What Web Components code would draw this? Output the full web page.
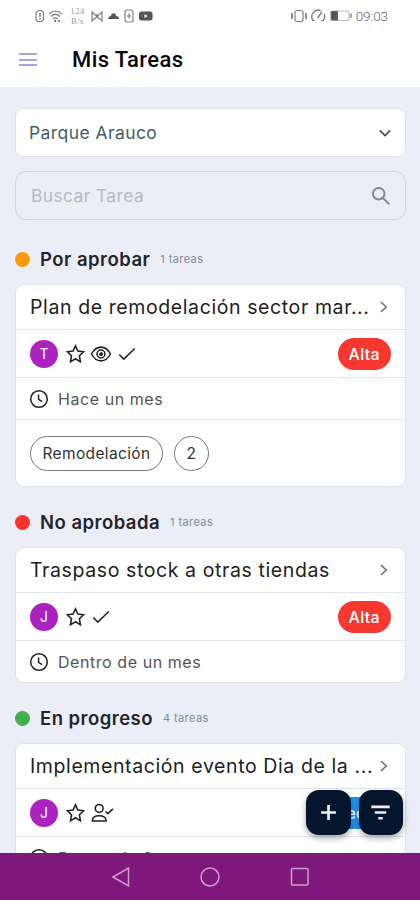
<!DOCTYPE html>
<html lang="es">
<head>
<meta charset="utf-8">
<title>Mis Tareas</title>
<style>
    body {
        margin: 0;
        width: 420px;
        height: 900px;
        overflow: hidden;
        font-family: Inter, "Noto Sans", sans-serif;
        background: #ebeef7;
        color: #1c1c1e;
    }
</style>
</head>
<body>
<task-app>
    <status-bar slot="top" time="09:03"></status-bar>
    <app-header slot="top">Mis Tareas</app-header>

    <select-field>Parque Arauco</select-field>
    <search-field>Buscar Tarea</search-field>

    <task-section color="#ff980a" count="1 tareas">
        <span slot="title">Por aprobar</span>
        <task-card initial="T" icons="star eye check" priority="Alta" due="Hace un mes">
            Plan de remodelación sector mar...
            <task-tag slot="tags">Remodelación</task-tag>
            <task-tag slot="tags">2</task-tag>
        </task-card>
    </task-section>

    <task-section color="#f8352d" count="1 tareas">
        <span slot="title">No aprobada</span>
        <task-card initial="J" icons="star check" priority="Alta" due="Dentro de un mes">
            Traspaso stock a otras tiendas
        </task-card>
    </task-section>

    <task-section color="#42ae4c" count="4 tareas">
        <span slot="title">En progreso</span>
        <task-card initial="J" icons="star user" priority="Media" tone="#2094f0" due="Dentro de 2 meses">
            Implementación evento Dia de la ...
        </task-card>
    </task-section>

    <fab-button slot="actions" icon="plus"></fab-button>
    <fab-button slot="actions" icon="filter"></fab-button>
    <nav-bar slot="bottom"></nav-bar>
</task-app>

<script>
const ICONS = {
    star: '<path d="M12.500 3.200l2.600 5.600 6.200.8-4.500 4.300 1.100 6.600-5.400-3.300-5.400 3.300 1.100-6.600-4.500-4.300 6.200-.8z"/>',
    eye: '<path d="M1.600 12C4 7.600 7.700 4.500 12 4.500s8 3.100 10.400 7.500C20 16.400 16.300 19.500 12 19.500S4 16.400 1.600 12z"/><circle cx="12" cy="12" r="4.300"/><path d="M12 10.300a1.800 1.800 0 1 1-1.800 1.800z" fill="currentColor" stroke-width="1"/>',
    check: '<path d="M3.500 12.500l5 5L20.500 6"/>',
    user: '<circle cx="10" cy="7" r="4.300"/><path d="M2.500 20.800c0-4 2.500-5.800 7.500-5.800s7.700 1.800 7.700 5.800z"/><path d="M17 10.300l2.500 2.400 5.500-5.200"/>',
    clock: '<circle cx="12" cy="12" r="10"/><path d="M11.500 6.500v6l4.300 2.700"/>',
    right: '<path d="M8 5.500l7 6.500-7 6.500"/>',
    down: '<path d="M5 8.500l7 7 7-7"/>',
    search: '<circle cx="9.500" cy="9.500" r="6.300"/><path d="M14.300 14.300l6.700 6.700"/>',
    plus: '<path d="M12 3.500v17M3.500 12h17"/>',
    filter: '<path d="M1.500 5.500h21M5.500 12h13M9.500 18.500h5"/>'
};

class UiIcon extends HTMLElement {
    constructor() {
        super();
        this.attachShadow({ mode: 'open' });
    }

    connectedCallback() {
        const size = this.getAttribute('size') || 22;
        const stroke = this.getAttribute('stroke') || 1.7;
        this.shadowRoot.innerHTML = `
            <style>
                :host { display: block; flex: none; width: ${size}px; height: ${size}px; }
                svg { display: block; overflow: visible; }
            </style>
            <svg width="${size}" height="${size}" viewBox="0 0 24 24" fill="none" stroke="currentColor" stroke-width="${stroke}">${ICONS[this.getAttribute('name')]}</svg>
        `;
    }
}

class TaskApp extends HTMLElement {
    constructor() {
        super();
        this.attachShadow({ mode: 'open' });
        this.shadowRoot.innerHTML = `
            <style>
                :host { display: flex; flex-direction: column; width: 420px; height: 900px; position: relative; }
                main { flex: 1; min-height: 0; overflow: hidden; padding: 20px 14px 0 15px; box-sizing: border-box; }
                .actions { position: absolute; right: 17px; bottom: 65px; display: flex; gap: 8px; }
            </style>
            <slot name="top"></slot>
            <main><slot></slot></main>
            <div class="actions"><slot name="actions"></slot></div>
            <slot name="bottom"></slot>
        `;
    }
}

class StatusBar extends HTMLElement {
    constructor() {
        super();
        this.attachShadow({ mode: 'open' });
    }

    connectedCallback() {
        this.shadowRoot.innerHTML = `
            <style>
                :host { display: flex; justify-content: space-between; align-items: center; height: 32px; flex: none;
                    padding: 0 32px 0 35px; background: #fff; }
                div { display: flex; align-items: center; }
                svg { display: block; fill: none; stroke: #808080; stroke-width: 1.2; }
                .speed { font: 8.500px/10px "Liberation Serif", serif; letter-spacing: .5px; width: 17px; margin: 0 5px 0 6px; text-align: center; color: #999; }
                .time { font: 300 13.500px/16px Roboto, sans-serif; letter-spacing: -.1px; color: #666; margin-left: 3px; }
            </style>
            <div>
                <svg width="10" height="14"><path d="M3.500 1.500h3l2 2v7l-2 2h-4l-1.500-2v-7z"/><path d="M5 4v4M5 9v1.500" stroke-width="1.500"/></svg>
                <svg width="15" height="14" style="margin-left:3px"><path d="M1 5c4-4 9-4 13 0M3 7.500c3-3 6-3 9 0M5 10c1.500-1.500 3-1.500 5 0"/><path d="M6 12h2M10 12h2" stroke-width="2"/></svg>
                <div class="speed">124 B/s</div>
                <svg width="13" height="12"><path d="M1 1v10l10-9v9l-10-9M6 4v4"/></svg>
                <svg width="13" height="12" style="margin-left:3px"><path d="M1 9c0-2 2-3 3-3 0-3 5-4 5 0 2 0 3 1 3 3z" fill="#555" stroke="none"/></svg>
                <svg width="10" height="14" style="margin-left:4px"><rect x="1" y="1" width="8" height="12" rx="2"/><path d="M5 4.500v5M2.800 7h4.400"/></svg>
                <svg width="14" height="10" style="margin-left:5px"><rect width="13.500" height="9" y=".5" rx="2.500" fill="#555" stroke="none"/><path d="M5.500 3v4l3-2z" fill="#fff" stroke="none"/></svg>
            </div>
            <div>
                <svg width="16" height="14"><rect x="4" y="1.500" width="8" height="11" rx="2"/><path d="M1 4v6M15 4v6" stroke-width="1.700"/></svg>
                <svg width="16" height="14" style="margin-left:3px"><path d="M3 11.500C-1 5 6-1 11 2M14 5c1 2 .5 5-1 6.500M7.500 9l4.500-6" stroke-width="1.400"/><path d="M2 11.500h3M11 11.500h3"/></svg>
                <svg width="23" height="12" style="margin-left:4px"><rect x="1" y="1" width="18" height="9.500" rx="2" stroke="#bbb"/><path d="M1.500 1.500h6v8.500h-6z" fill="#555" stroke="#666"/><path d="M21 3.500v4.500" stroke-width="2" stroke="#aaa"/></svg>
                <span class="time">${this.getAttribute('time')}</span>
            </div>
        `;
    }
}

class AppHeader extends HTMLElement {
    constructor() {
        super();
        this.attachShadow({ mode: 'open' });
        this.shadowRoot.innerHTML = `
            <style>
                :host { display: flex; align-items: center; flex: none; height: 56px; box-sizing: border-box; padding-left: 19px; gap: 35px;
                    background: #fff; border-bottom: 1px solid #f0f1f6; }
                .menu { width: 18px; height: 13px; display: flex; flex-direction: column; justify-content: space-between; }
                i { height: 2px; background: #a0a7dc; }
                h1 { margin: 0; font: 500 22px/28px Roboto, sans-serif; letter-spacing: .4px; color: #08080a; }
            </style>
            <div class="menu"><i></i><i></i><i></i></div>
            <h1><slot></slot></h1>
        `;
    }
}

class SelectField extends HTMLElement {
    constructor() {
        super();
        this.attachShadow({ mode: 'open' });
        this.shadowRoot.innerHTML = `
            <style>
                :host { display: flex; align-items: center; justify-content: space-between; box-sizing: border-box; height: 49px; padding: 0 11px 0 13px;
                    background: #fff; border: 1px solid #dfe1e6; border-radius: 8px; font-size: 17.500px; letter-spacing: .42px; color: #426068; }
                ui-icon { color: #444; }
            </style>
            <slot></slot>
            <ui-icon name="down" size="18" stroke="1.900"></ui-icon>
        `;
    }
}

class SearchField extends HTMLElement {
    constructor() {
        super();
        this.attachShadow({ mode: 'open' });
        this.shadowRoot.innerHTML = `
            <style>
                :host { display: flex; align-items: center; justify-content: space-between; box-sizing: border-box; height: 49px; margin-top: 14px;
                    padding: 0 13px 0 15px; border: 1px solid #d2d4db; border-radius: 11px; font-size: 17.500px; letter-spacing: .35px; color: #b8bac0; }
                ui-icon { color: #85878d; }
            </style>
            <slot></slot>
            <ui-icon name="search" size="22" stroke="2.200"></ui-icon>
        `;
    }
}

class TaskSection extends HTMLElement {
    constructor() {
        super();
        this.attachShadow({ mode: 'open' });
    }

    connectedCallback() {
        this.shadowRoot.innerHTML = `
            <style>
                :host { display: block; }
                :host(:first-of-type) { margin-top: 4px; }
                header { display: flex; align-items: center; height: 60px; box-sizing: border-box; padding-top: 10px;
                    font-size: 18.500px; font-weight: 600; line-height: 24px; letter-spacing: .47px; color: #24252a; }
                .dot { width: 15px; height: 15px; border-radius: 50%; margin-right: 10px; background: ${this.getAttribute('color')}; }
                .count { font-size: 11px; font-weight: 400; letter-spacing: .4px; color: #7b8c96; margin-left: 10px; }
            </style>
            <header>
                <div class="dot"></div>
                <slot name="title"></slot>
                <span class="count">${this.getAttribute('count')}</span>
            </header>
            <slot></slot>
        `;
    }
}

class TaskCard extends HTMLElement {
    constructor() {
        super();
        this.attachShadow({ mode: 'open' });
    }

    connectedCallback() {
        const icons = this.getAttribute('icons').split(' ');
        const hasTags = this.querySelector('[slot="tags"]');
        this.shadowRoot.innerHTML = `
            <style>
                :host { display: block; box-sizing: border-box; background: #fff; border: 1px solid #dfe2e8; border-radius: 9px; }
                .row { display: flex; align-items: center; box-sizing: border-box; padding: 0 14px; border-bottom: 1px solid #e3e6ea; }
                .row:last-child { border-bottom: 0; }
                .title { height: 45px; justify-content: space-between; padding-right: 12px; font-size: 19.500px; letter-spacing: .6px;
                    white-space: nowrap; color: #202124; }
                .title ui-icon { color: #777; }
                .meta { height: 48px; gap: 4px; color: #222; }
                .avatar { width: 28px; height: 28px; margin-right: 2px; border-radius: 50%; background: #ab22be; color: #fff;
                    font-size: 14px; line-height: 28px; text-align: center; }
                .badge { margin-left: auto; height: 32px; padding: 0 11px; border-radius: 16px; background: ${this.getAttribute('tone') || '#f7382f'};
                    color: #fff; font-size: 16px; font-weight: 500; letter-spacing: .3px; line-height: 33px; }
                .due { height: ${hasTags ? 42 : 41}px; padding-top: ${hasTags ? 0 : 1}px; gap: 9px; font-size: 16px; letter-spacing: .56px; color: #555; }
                .due ui-icon { color: #222; margin-left: -1px; }
                .tags { height: 66px; gap: 11px; }
            </style>
            <div class="row title"><slot></slot><ui-icon name="right" size="18" stroke="2.200"></ui-icon></div>
            <div class="row meta">
                <div class="avatar">${this.getAttribute('initial')}</div>
                ${icons.map(name => `<ui-icon name="${name}"></ui-icon>`).join('')}
                <span class="badge">${this.getAttribute('priority')}</span>
            </div>
            <div class="row due"><ui-icon name="clock" size="20" stroke="1.800"></ui-icon>${this.getAttribute('due')}</div>
            ${hasTags ? '<div class="row tags"><slot name="tags"></slot></div>' : ''}
        `;
    }
}

class TaskTag extends HTMLElement {
    constructor() {
        super();
        this.attachShadow({ mode: 'open' });
        this.shadowRoot.innerHTML = `
            <style>
                :host { display: block; box-sizing: border-box; height: 35px; min-width: 35px; padding: 0 11.500px; border: 1px solid #777; border-radius: 18px;
                    font-size: 15.500px; letter-spacing: .35px; line-height: 34px; text-align: center; color: #333; }
            </style>
            <slot></slot>
        `;
    }
}

class FabButton extends HTMLElement {
    constructor() {
        super();
        this.attachShadow({ mode: 'open' });
    }

    connectedCallback() {
        this.shadowRoot.innerHTML = `
            <style>
                :host { display: flex; align-items: center; justify-content: center; width: 44.500px; height: 45px; border-radius: 13px;
                    background: #04152e; color: #eee; box-shadow: 0 3px 6px rgba(0, 0, 0, .35); }
            </style>
            <ui-icon name="${this.getAttribute('icon')}" size="21" stroke="3"></ui-icon>
        `;
    }
}

class NavBar extends HTMLElement {
    constructor() {
        super();
        this.attachShadow({ mode: 'open' });
        this.shadowRoot.innerHTML = `
            <style>
                :host { display: flex; align-items: center; justify-content: center; gap: 70px; height: 47px; flex: none; background: #7f187b; }
                svg { display: block; fill: none; stroke: #cda0cc; stroke-width: 1.500; }
            </style>
            <svg width="20" height="22"><path d="M18.500 2v18L3 11z"/></svg>
            <svg width="20" height="20"><circle cx="10" cy="10" r="9"/></svg>
            <svg width="20" height="20"><rect x="1.500" y="1.500" width="16.500" height="16.500" rx="1"/></svg>
        `;
    }
}

customElements.define('ui-icon', UiIcon);
customElements.define('task-app', TaskApp);
customElements.define('status-bar', StatusBar);
customElements.define('app-header', AppHeader);
customElements.define('select-field', SelectField);
customElements.define('search-field', SearchField);
customElements.define('task-section', TaskSection);
customElements.define('task-card', TaskCard);
customElements.define('task-tag', TaskTag);
customElements.define('fab-button', FabButton);
customElements.define('nav-bar', NavBar);
</script>
</body>
</html>
